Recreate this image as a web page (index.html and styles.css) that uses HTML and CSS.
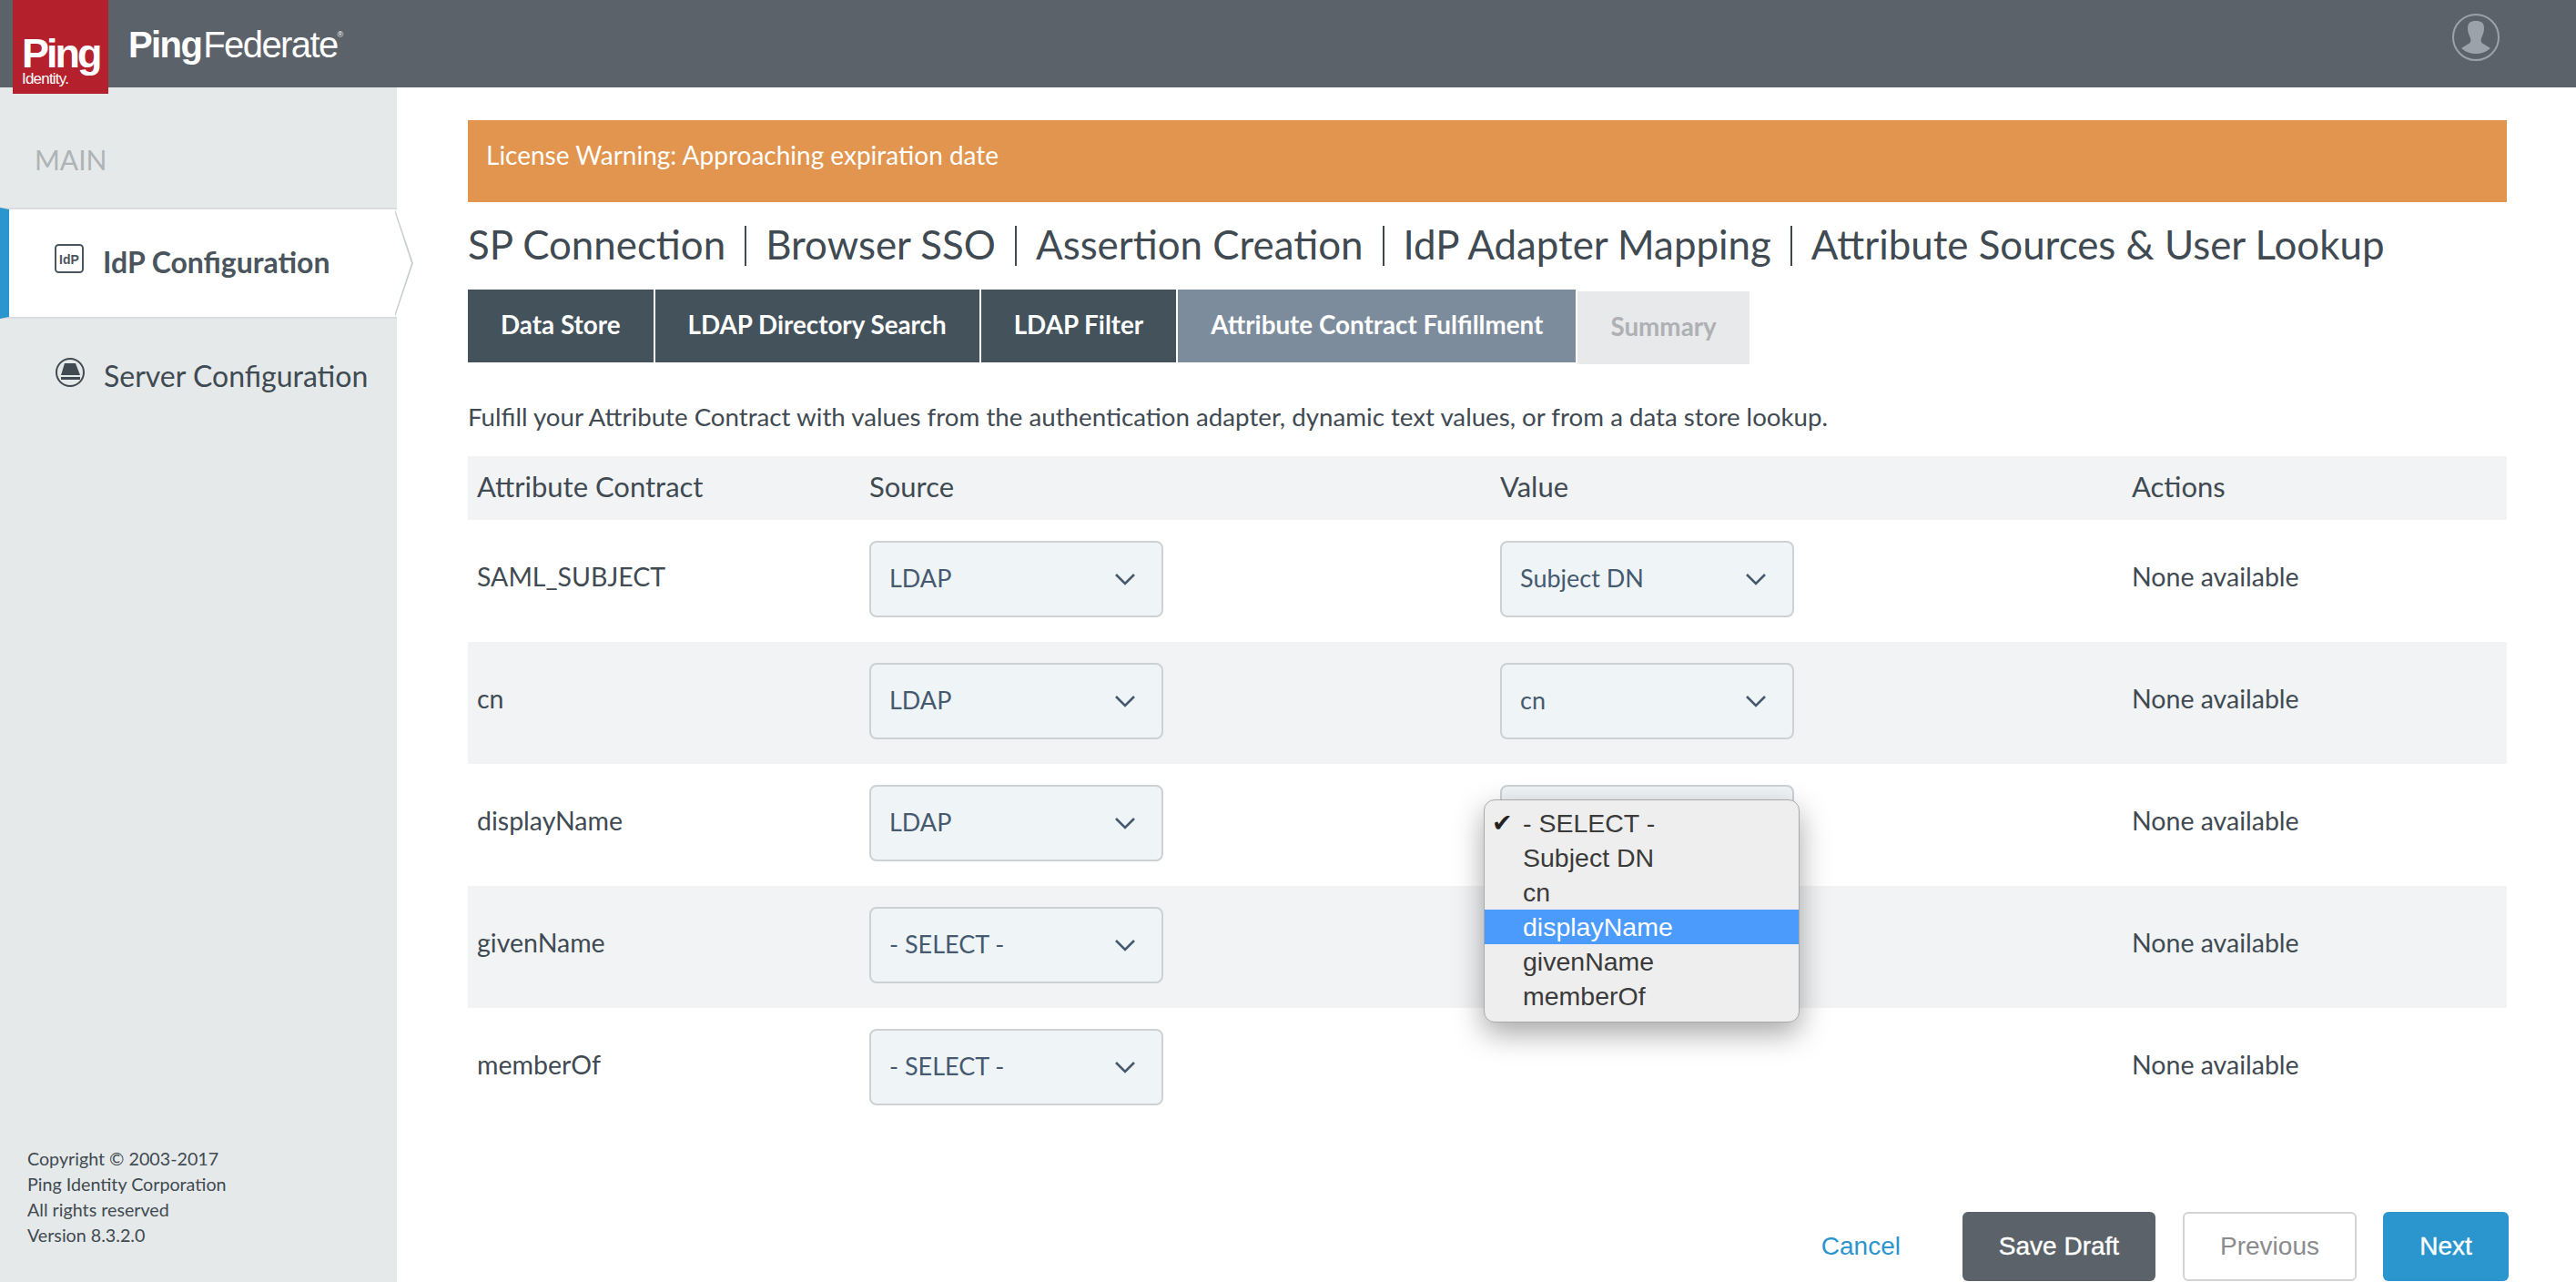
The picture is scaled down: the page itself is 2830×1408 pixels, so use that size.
FILE: index.html
```html
<!DOCTYPE html>
<html lang="en">
<head>
    <meta charset="UTF-8">
    <title>PingFederate</title>
    <link rel="stylesheet" href="styles.css">
</head>
<body>
    <header class="topbar">
        <div class="logo">
            <span class="logo-ping">Ping</span>
            <span class="logo-identity">Identity.</span>
        </div>
        <div class="product"><b>Ping</b>Federate<sup>®</sup></div>
        <svg class="user-icon" viewBox="0 0 52 52">
            <circle cx="26" cy="26" r="25" fill="none" stroke="#9aa3ab" stroke-width="2"/>
            <path d="M26 8C32 8 35 10 35 16C35 21 33 24 32 27C31 30 32 32 34 33L42 38A24 24 0 0 1 10 38L18 33C20 32 21 30 20 27C19 24 17 21 17 16C17 10 20 8 26 8Z" fill="#9aa3ab"/>
        </svg>
    </header>

    <div class="layout">
        <aside class="sidebar">
            <div class="nav-title">MAIN</div>
            <a class="nav-item active">
                <svg class="nav-icon" viewBox="0 0 34 34">
                    <rect x="1" y="1" width="30" height="30" rx="3.500" fill="none" stroke="#4a555d" stroke-width="2"/>
                    <text x="16" y="21.500" text-anchor="middle" class="icon-text">IdP</text>
                </svg>
                <span>IdP Configuration</span>
            </a>
            <a class="nav-item">
                <svg class="nav-icon" viewBox="0 0 34 34">
                    <circle cx="17" cy="16" r="15" fill="none" stroke="#3f4a52" stroke-width="2"/>
                    <path d="M11 6h12l5 13H7z" fill="#3f4a52"/>
                    <rect x="7" y="21" width="21" height="3" fill="#3f4a52"/>
                </svg>
                <span>Server Configuration</span>
            </a>
            <div class="copyright">
                Copyright © 2003-2017<br>
                Ping Identity Corporation<br>
                All rights reserved<br>
                Version 8.3.2.0
            </div>
        </aside>

        <main class="content">
            <div class="license">License Warning: Approaching expiration date</div>

            <h1 class="crumbs">
                <span>SP Connection</span>
                <span>Browser SSO</span>
                <span>Assertion Creation</span>
                <span>IdP Adapter Mapping</span>
                <span>Attribute Sources &amp; User Lookup</span>
            </h1>

            <div class="tabs">
                <div class="tab">Data Store</div>
                <div class="tab">LDAP Directory Search</div>
                <div class="tab">LDAP Filter</div>
                <div class="tab current">Attribute Contract Fulfillment</div>
                <div class="tab disabled">Summary</div>
            </div>

            <p class="intro">Fulfill your Attribute Contract with values from the authentication adapter, dynamic text values, or from a data store lookup.</p>

            <div class="table">
                <div class="row head">
                    <div>Attribute Contract</div>
                    <div>Source</div>
                    <div>Value</div>
                    <div>Actions</div>
                </div>
                <div class="row">
                    <div>SAML_SUBJECT</div>
                    <div class="select">LDAP<svg viewBox="0 0 24 14"><path d="M2 2l10 10L22 2"/></svg></div>
                    <div class="select">Subject DN<svg viewBox="0 0 24 14"><path d="M2 2l10 10L22 2"/></svg></div>
                    <div>None available</div>
                </div>
                <div class="row">
                    <div>cn</div>
                    <div class="select">LDAP<svg viewBox="0 0 24 14"><path d="M2 2l10 10L22 2"/></svg></div>
                    <div class="select">cn<svg viewBox="0 0 24 14"><path d="M2 2l10 10L22 2"/></svg></div>
                    <div>None available</div>
                </div>
                <div class="row">
                    <div>displayName</div>
                    <div class="select">LDAP<svg viewBox="0 0 24 14"><path d="M2 2l10 10L22 2"/></svg></div>
                    <div class="select open">
                        <ul class="menu">
                            <li class="checked">- SELECT -</li>
                            <li>Subject DN</li>
                            <li>cn</li>
                            <li class="hover">displayName</li>
                            <li>givenName</li>
                            <li>memberOf</li>
                        </ul>
                    </div>
                    <div>None available</div>
                </div>
                <div class="row">
                    <div>givenName</div>
                    <div class="select">- SELECT -<svg viewBox="0 0 24 14"><path d="M2 2l10 10L22 2"/></svg></div>
                    <div></div>
                    <div>None available</div>
                </div>
                <div class="row">
                    <div>memberOf</div>
                    <div class="select">- SELECT -<svg viewBox="0 0 24 14"><path d="M2 2l10 10L22 2"/></svg></div>
                    <div></div>
                    <div>None available</div>
                </div>
            </div>

            <div class="actions">
                <a class="cancel">Cancel</a>
                <button class="btn save">Save Draft</button>
                <button class="btn prev">Previous</button>
                <button class="btn next">Next</button>
            </div>
        </main>
    </div>
</body>
</html>
```

FILE: styles.css
```css
* {
    box-sizing: border-box;
}
html, body {
    height: 100%;
}
body {
    margin: 0;
    overflow: hidden;
    background: #fff;
    color: #3f4a52;
    font-family: Lato, "Open Sans", sans-serif;
    display: flex;
    flex-direction: column;
}

/* top bar */
.topbar {
    height: 96px;
    flex: none;
    background: #5b6269;
    display: flex;
    align-items: flex-start;
    padding-left: 14px;
    position: relative;
    z-index: 2;
}
.logo {
    width: 105px;
    height: 103px;
    background: #b5202d;
    color: #fff;
    font-family: "Liberation Sans", sans-serif;
    display: flex;
    flex-direction: column;
    padding: 39px 0 0 10px;
}
.logo-ping {
    font-size: 45px;
    line-height: 40px;
    font-weight: bold;
    letter-spacing: -3px;
}
.logo-identity {
    font-size: 17px;
    line-height: 16px;
    letter-spacing: -0.8px;
}
.product {
    margin: 27px 0 0 22px;
    color: #fff;
    font-family: "Liberation Sans", sans-serif;
    font-size: 40px;
    line-height: 44px;
    letter-spacing: -1.6px;
}
.product b {
    margin-right: 2px;
}
.product sup {
    font-size: 9px;
    line-height: 0;
    vertical-align: 22px;
    letter-spacing: 0;
}
.user-icon {
    width: 52px;
    height: 52px;
    margin: 15px 84px 0 auto;
}

.layout {
    flex: 1;
    display: flex;
    min-height: 0;
}

/* sidebar */
.sidebar {
    width: 436px;
    flex: none;
    background: #e6e9ea;
    display: flex;
    flex-direction: column;
}
.nav-title {
    font-size: 30px;
    line-height: 36px;
    color: #aeb3b6;
    margin: 61px 0 0 38px;
    height: 71px;
}
.nav-item {
    height: 122px;
    display: flex;
    align-items: center;
    gap: 20px;
    padding-left: 60px;
    font-size: 32px;
    color: #3f4a52;
    position: relative;
}
.nav-item span {
    margin-top: -3px;
}
.nav-item.active {
    background: #fff;
    font-weight: bold;
    color: #4a555d;
    gap: 19px;
    border-top: 2px solid #d9dddf;
    border-bottom: 2px solid #d9dddf;
    border-left: 10px solid #2b95cd;
    padding-left: 50px;
}
/* the arrow tip that sticks out of the sidebar */
.nav-item.active::after {
    content: "";
    position: absolute;
    left: 424px;
    top: 0;
    width: 20px;
    height: 118px;
    background: #c9cdce;
    clip-path: polygon(0 0, 100% 50%, 0 100%);
}
.nav-item.active::before {
    content: "";
    position: absolute;
    left: 423px;
    top: 1px;
    width: 19px;
    height: 116px;
    background: #fff;
    clip-path: polygon(0 0, 100% 50%, 0 100%);
    z-index: 1;
}
.nav-item + .nav-item {
    margin-top: 3px;
}
.nav-icon {
    width: 34px;
    height: 34px;
    flex: none;
    margin-top: -8px;
}
.icon-text {
    font-family: "Liberation Sans", sans-serif;
    font-size: 14px;
    fill: #4a555d;
}
.copyright {
    margin-top: auto;
    padding: 0 0 37px 30px;
    font-size: 19.700px;
    line-height: 28px;
    color: #3f4a52;
}

/* main area */
.content {
    flex: 1;
    min-width: 0;
    padding: 36px 76px 0 78px;
}
.license {
    height: 90px;
    background: #e2954f;
    color: #fff;
    font-size: 28px;
    line-height: 32px;
    padding: 6px 0 20px 20px;
    display: flex;
    align-items: center;
}
.crumbs {
    margin: 26px 0 0;
    height: 44px;
    font-size: 43.850px;
    font-weight: 400;
    line-height: 40px;
    display: flex;
    color: #3f4a52;
}
.crumbs span {
    padding-right: 21px;
    margin-right: 21px;
    border-right: 2px solid #3f4a52;
    white-space: nowrap;
}
.crumbs span:last-child {
    border-right: none;
}
.tabs {
    margin-top: 26px;
    display: flex;
    gap: 2px;
    align-items: flex-start;
}
.tab {
    height: 80px;
    padding: 0 36px;
    background: #44525c;
    color: #fff;
    font-size: 27.800px;
    font-weight: bold;
    line-height: 78px;
}
.tab.current {
    background: #7d8c9d;
}
.tab.disabled {
    margin-top: 2px;
    background: #e8e9eb;
    color: #aeb0b3;
}
.intro {
    margin: 42px 0 27px;
    font-size: 27.700px;
    line-height: 32px;
}

/* attribute table */
.row {
    height: 134px;
    padding-bottom: 4px;
    display: grid;
    grid-template-columns: 441px 693px 694px 1fr;
    align-items: center;
    font-size: 28.500px;
}
.row > div:not(.select) {
    padding-bottom: 6px;
}
.row:nth-child(odd) {
    background: #f1f3f5;
}
.row > div:first-child {
    padding-left: 10px;
}
.row.head {
    height: 70px;
    padding-bottom: 0;
    background: #f1f3f5;
    font-size: 31px;
}
.row.head > div {
    padding-bottom: 5px;
}
.select {
    width: 323px;
    height: 84px;
    background: #eff4f7;
    border: 2px solid #cdd1d4;
    border-radius: 8px;
    padding: 0 20px 4px;
    color: #45596f;
    font-size: 27px;
    display: flex;
    align-items: center;
    justify-content: space-between;
    position: relative;
}
.select svg {
    width: 24px;
    height: 14px;
    margin: 4px 8px 0 0;
    fill: none;
    stroke: #44586e;
    stroke-width: 2.600;
}

/* open native-looking dropdown */
.menu {
    position: absolute;
    left: -20px;
    top: 14px;
    width: 347px;
    height: 245px;
    margin: 0;
    padding: 6px 0 0;
    list-style: none;
    background: #eeeeee;
    border: 1px solid #a9a9a9;
    border-radius: 12px;
    box-shadow: 0 12px 32px rgba(0, 0, 0, 0.35);
    font-family: "Liberation Sans", sans-serif;
    font-size: 28.500px;
    color: #3a3a3a;
    z-index: 3;
}
.menu li {
    height: 38px;
    line-height: 38px;
    padding-left: 42px;
    position: relative;
}
.menu li.hover {
    background: #4a9bfc;
    color: #fff;
}
.menu li.checked::before {
    content: "✔";
    position: absolute;
    left: 8px;
    font-family: "DejaVu Sans", sans-serif;
    font-size: 27px;
    color: #222;
}

/* bottom buttons */
.actions {
    margin: 90px -2px 0 0;
    display: flex;
    align-items: center;
    justify-content: flex-end;
    font-family: "Liberation Sans", sans-serif;
    font-size: 28px;
}
.cancel {
    color: #2b95cd;
    margin-right: 68px;
}
.btn {
    height: 76px;
    border: none;
    border-radius: 6px;
    font: inherit;
    color: #fff;
}
.save {
    width: 212px;
    background: #5b6269;
    margin-right: 30px;
    -webkit-text-stroke: 0.4px #fff;
}
.prev {
    width: 191px;
    background: #fff;
    border: 2px solid #d2d3d5;
    color: #8a8b8d;
    margin-right: 29px;
}
.next {
    width: 138px;
    background: #2b95cd;
    -webkit-text-stroke: 0.4px #fff;
}
```
